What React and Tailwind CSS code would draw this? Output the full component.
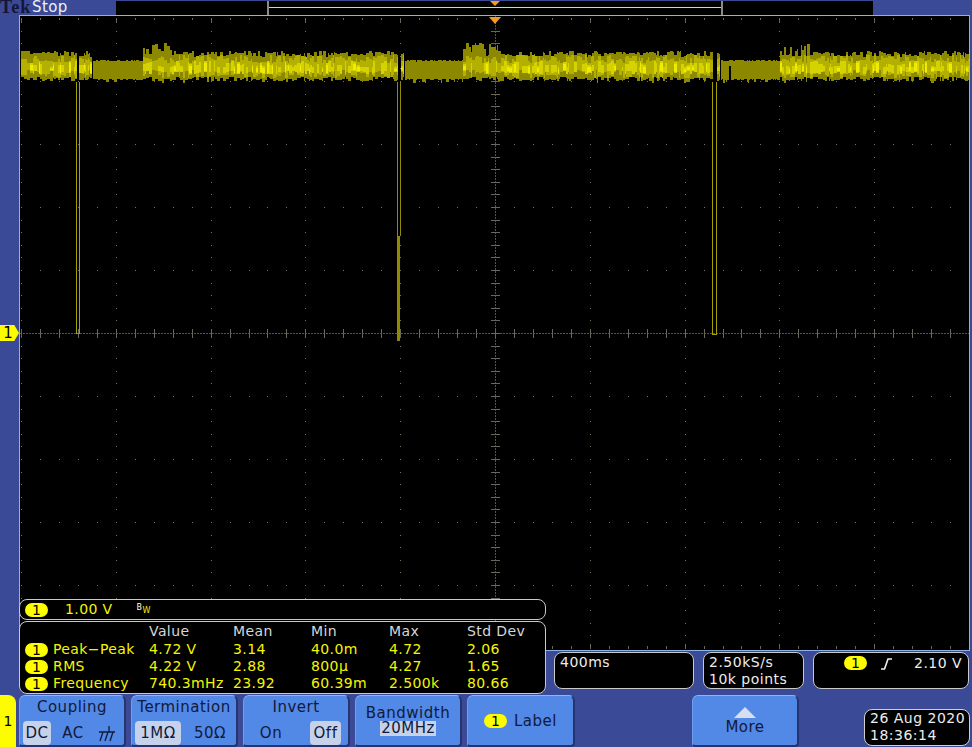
import React from 'react';

const FONT = { fontFamily: '"DejaVu Sans", sans-serif' };

// graticule origin sits at page (20,16), all wave numbers below are page coords
const OX = 20;
const OY = 16;
const CX = 495;
const CY = 333;
const DIV_X = 94.8;
const DIV_Y = 63;

const rng = (() => {
  let s = 12345;
  return () => {
    s = (s * 1664525 + 1013904223) % 4294967296;
    return s / 4294967296;
  };
})();

const segments = [
  [21, 92, 'noisy'],
  [93, 143, 'quiet'],
  [143, 176, 'tall'],
  [176, 404, 'noisy'],
  [405, 463, 'quiet'],
  [463, 498, 'tall'],
  [498, 720, 'noisy'],
  [721, 780, 'quiet'],
  [780, 818, 'tall'],
  [818, 969, 'noisy'],
];
const gaps = [77, 78, 398, 399, 400, 713, 714, 715, 716];

function buildWave() {
  let olive = '';
  let mid = '';
  let bright = '';
  let peak = '';
  segments.forEach(([a, b, kind]) => {
    let x = a;
    while (x < b) {
      const r1 = rng();
      const r2 = rng();
      const r3 = rng();
      const r4 = rng();
      // noise comes in little blocks 1-3px wide, not single pixel columns
      const w = 1 + Math.floor(rng() * 3);
      for (let i = 0; i < w && x < b; i++, x++) {
        if (gaps.includes(x)) continue;
        const px = x - OX + 0.5;
        if (kind === 'quiet') {
          const top = 60 + Math.floor(r1 * 2) + (r3 > 0.9 ? 1 : 0);
          const bot = 79 + Math.floor(r2 * 2) + (r4 > 0.8 ? 3 : 0);
          olive += `M${px} ${top - OY}V${bot - OY}`;
          continue;
        }
        const spike = kind === 'tall' ? 43 + r1 * 14 : (r1 > 0.9 ? 47 : 51) + r1 * 7;
        const top = Math.floor(spike);
        const bot = Math.floor(77 + r2 * 5 + (r4 > 0.9 ? 2 : 0));
        olive += `M${px} ${top - OY}V${bot - OY}`;
        const mt = Math.floor(55 + r3 * 9);
        const mb = Math.floor(70 + r4 * 9);
        mid += `M${px} ${mt - OY}V${mb - OY}`;
        if (r1 > 0.35) {
          const bt = Math.floor(61 + r2 * 7);
          const bb = Math.floor(69 + r1 * 6);
          bright += `M${px} ${bt - OY}V${bb - OY}`;
          if (r3 > 0.72) peak += `M${px} ${bt + 2 - OY}V${bb - 1 - OY}`;
        }
      }
    }
  });
  return { olive, mid, bright, peak };
}

function buildGrid() {
  let dots = '';
  let ticks = '';
  // top and bottom edge ticks, plus the dotted rows
  for (let i = 0; i <= 50; i++) {
    const x = Math.round(CX + (i - 25) * (DIV_X / 5)) - OX + 0.5;
    const major = i % 5 === 0;
    ticks += `M${x} ${18 - OY}V${(major ? 23 : 20) - OY}`;
    ticks += `M${x} ${(major ? 644 : 646) - OY}V${649 - OY}`;
    for (let r = 1; r < 10; r++) {
      if (r === 5) continue;
      const y = CY + (r - 5) * DIV_Y - OY;
      dots += `M${x} ${y}v1`;
    }
    ticks += `M${x} ${CY - 4 - OY}V${CY + 5 - OY}`;
  }
  // dotted columns
  for (let c = 0; c <= 10; c++) {
    if (c === 5) continue;
    const x = Math.round(CX + (c - 5) * DIV_X) - OX + 0.5;
    for (let i = 1; i < 50; i++) {
      const y = Math.round(18 + i * (DIV_Y / 5)) - OY;
      dots += `M${x} ${y}v1`;
    }
  }
  // center cross, short bars on the vertical
  for (let i = 0; i <= 50; i++) {
    const y = Math.round(18 + i * (DIV_Y / 5)) - OY + 0.5;
    ticks += `M${CX - 4 - OX} ${y}H${CX + 5 - OX}`;
  }
  return { dots, ticks };
}

const wave = buildWave();
const grid = buildGrid();

const Graticule = () => (
  <div className="ml-[19px] h-[636px] w-[951px] border border-[#8fb1ea] bg-black">
    <svg width="949" height="634" className="block" shapeRendering="crispEdges">
      <path d={grid.dots} stroke="#77745f" strokeWidth="1" fill="none" />
      <path d={`M0 ${CY - OY + 0.5}H949`} stroke="#56534a" strokeDasharray="2 1" fill="none" />
      <path d={`M${CX - OX + 0.5} 0V634`} stroke="#56534a" strokeDasharray="2 1" fill="none" />
      <path d={grid.ticks} stroke="#69665a" strokeWidth="1" fill="none" />

      <g className="[filter:blur(0.45px)]">
        <path d={wave.olive} stroke="#8c8800" fill="none" />
        <path d={wave.mid} stroke="#b4b000" fill="none" />
        <path d={wave.bright} stroke="#d6d200" fill="none" />
        <path d={wave.peak} stroke="#f0ec00" fill="none" />
        <path d="M709 50h2v16h-2z" fill="#000" />
      </g>

      {/* the three dropouts */}
      <path d="M56.5 66V317H59.5V66" stroke="#a3a000" fill="none" />
      <path d="M377.5 66V220M380.5 66V220" stroke="#8f8b00" fill="none" />
      <path d="M377 220h3v105h-3z" fill="#8f8b00" />
      <path d="M692.5 66V318H696.5V66" stroke="#a3a000" fill="none" />

      <polygon points="469,1 481,1 475,8" fill="#f59a23" shapeRendering="auto" />
    </svg>
  </div>
);

const Pill = ({ className = '' }) => (
  <span className={`inline-flex h-[14px] w-[23px] shrink-0 items-center justify-center rounded-full bg-[#fdfd00] text-[14px] leading-none tracking-normal text-black ${className}`}>
    1
  </span>
);

const measurements = [
  { name: 'Peak−Peak', value: '4.72 V', mean: '3.14', min: '40.0m', max: '4.72', dev: '2.06' },
  { name: 'RMS', value: '4.22 V', mean: '2.88', min: '800µ', max: '4.27', dev: '1.65' },
  { name: 'Frequency', value: '740.3mHz', mean: '23.92', min: '60.39m', max: '2.500k', dev: '80.66' },
];

const COLS = 'grid grid-cols-[28px_96px_84px_78px_78px_78px_1fr]';

const Readouts = () => (
  <div className="z-10 -mt-[52px] ml-[19px] flex h-[95px] w-[527px] flex-col gap-px">
    <div className="flex h-[21px] items-center rounded-lg border border-[#c9c9c9] bg-black pl-[5px] text-[14px] tracking-[0.4px] text-[#f5f500]">
      <Pill />
      <span className="ml-[17px]">1.00 V</span>
      <span className="ml-[24px] flex items-start text-[8px] leading-none text-white">
        B<span className="mt-[3px] text-[#f5f500]">W</span>
      </span>
    </div>
    <div className="flex h-[73px] flex-col rounded-lg border border-[#c9c9c9] bg-black pl-[5px] pt-px text-[14px] leading-[17px] tracking-[0.4px] text-[#f5f500]">
      <div className={`${COLS} mb-px text-[#d6d6d6]`}>
        <span />
        <span />
        <span>Value</span>
        <span>Mean</span>
        <span>Min</span>
        <span>Max</span>
        <span>Std Dev</span>
      </div>
      {measurements.map((m) => (
        <div key={m.name} className={`${COLS} items-center`}>
          <Pill />
          <span>{m.name}</span>
          <span>{m.value}</span>
          <span>{m.mean}</span>
          <span>{m.min}</span>
          <span>{m.max}</span>
          <span>{m.dev}</span>
        </div>
      ))}
    </div>
  </div>
);

const SideBox = ({ className = '', children }) => (
  <div className={`h-[37px] rounded-lg border border-[#c9c9c9] bg-black text-[14px] leading-[17px] tracking-[0.5px] text-[#ededed] ${className}`}>
    {children}
  </div>
);

const MenuButton = ({ className = 'w-[107px]', children }) => (
  <div className={`flex h-[52px] flex-col items-center rounded-t-md rounded-b-sm border-t border-l border-t-[#8db4f4] border-l-[#6f9ef0] border-r-2 border-b-2 border-r-[#27336e] border-b-[#27336e] bg-[#5288e6] text-[15px] tracking-[0.5px] text-[#101a3a] ${className}`}>
    {children}
  </div>
);

const Choice = ({ active, children, className = '' }) => (
  <span className={`flex h-[24px] items-center justify-center rounded ${active ? 'bg-[#c6d2ea]' : ''} ${className}`}>
    {children}
  </span>
);

const GroundIcon = () => (
  <svg width="18" height="17" viewBox="0 0 18 17" fill="none" stroke="#101a3a" strokeWidth="1.3">
    <path d="M11 1v6M1 7h16M5 7L2 16M10 7L7 16M15 7L12 16" />
  </svg>
);

const App = () => (
  <div className="relative h-[747px] w-[972px] overflow-hidden bg-[#3b4a96]" style={FONT}>
    {/* status line and record view */}
    <div className="flex h-[15px]">
      <div className="flex h-[15px] w-[116px] items-end">
        <span className="w-[32px] text-[18px] font-bold leading-[15px] tracking-[1px] text-[#14163a] [font-family:'Liberation_Serif',serif]">
          Tek
        </span>
        <span className="text-[15px] leading-[15px] tracking-[0.4px] text-[#eef0fa]">
          Stop
        </span>
      </div>
      <div className="relative mt-px flex h-[14px] w-[757px] bg-[#000200]">
        <div className="ml-[151px] flex h-[14px] w-[456px] items-center border-x-2 border-[#8a8a8a] pb-[1px]">
          <div className="h-px w-full bg-[#f0ec00]" />
        </div>
        <div className="absolute left-[374px] top-0 h-0 w-0 border-x-[5px] border-t-[5px] border-x-transparent border-t-[#f59a23]" />
      </div>
    </div>

    <Graticule />

    {/* lower readouts */}
    <div className="flex h-[44px]">
      <Readouts />
      <div className="ml-[8px] flex gap-[9px] pt-px">
        <SideBox className="w-[140px] pl-[5px] pt-[1px]">400ms</SideBox>
        <SideBox className="w-[101px] pl-[5px] pt-[1px]">
          <div>2.50kS/s</div>
          <div>10k points</div>
        </SideBox>
        <SideBox className="flex w-[156px] items-start pl-[30px] pt-[2px]">
          <Pill className="mt-px" />
          <svg width="14" height="14" viewBox="0 0 14 14" fill="none" stroke="#f0f0f0" strokeWidth="1.6" className="ml-[13px] mt-[2px]">
            <path d="M1 12h3.5L8 2h4" />
          </svg>
          <span className="ml-[20px]">2.10 V</span>
        </SideBox>
      </div>
    </div>

    {/* bottom menu */}
    <div className="flex h-[52px] items-start">
      <div className="flex h-[52px] w-[16px] items-center justify-center rounded-tr-lg bg-[#fdfd00] text-[14px] text-black">1</div>
      <div className="ml-[3px] flex gap-[5px]">
        <MenuButton>
          <span className="mt-px leading-[20px]">Coupling</span>
          <div className="mt-[4px] flex w-full items-center px-[3px]">
            <Choice active className="w-[28px]">DC</Choice>
            <Choice className="ml-[8px] w-[28px]">AC</Choice>
            <Choice className="ml-[7px] w-[26px]"><GroundIcon /></Choice>
          </div>
        </MenuButton>
        <MenuButton>
          <span className="mt-px leading-[20px]">Termination</span>
          <div className="mt-[4px] flex w-full items-center justify-between pl-[3px] pr-[9px]">
            <Choice active className="w-[46px]">1MΩ</Choice>
            <Choice className="w-[34px]">50Ω</Choice>
          </div>
        </MenuButton>
        <MenuButton>
          <span className="mt-px leading-[20px]">Invert</span>
          <div className="mt-[4px] flex w-full items-center justify-between pl-[12px] pr-[7px]">
            <Choice className="w-[30px]">On</Choice>
            <Choice active className="w-[31px]">Off</Choice>
          </div>
        </MenuButton>
        <MenuButton>
          <span className="mt-[9px] leading-[16px]">Bandwidth</span>
          <span className="bg-[#c6d2ea] px-px leading-[15px]">20MHz</span>
        </MenuButton>
        <MenuButton className="w-[108px] !flex-row justify-center">
          <Pill />
          <span className="ml-[7px] leading-[18px]">Label</span>
        </MenuButton>
      </div>
      <MenuButton className="ml-[117px] w-[107px]">
        <div className="mt-[11px] h-0 w-0 border-x-[11px] border-b-[11px] border-x-transparent border-b-[#d6def0]" />
        <span className="leading-[18px]">More</span>
      </MenuButton>
      <div className="ml-[65px] mt-[14px] h-[37px] w-[106px] rounded-lg border border-[#d0d0d0] bg-black pl-[5px] text-[14px] leading-[17px] tracking-[0.5px] text-[#ededed]">
        <div>26 Aug 2020</div>
        <div>18:36:14</div>
      </div>
    </div>

    {/* channel 1 ground marker */}
    <div className="absolute left-0 top-[325px] flex h-[16px] w-[19px] items-center justify-center bg-[#fdfd00] pr-[3px] text-[15px] text-black [clip-path:polygon(0_0,75%_0,100%_50%,75%_100%,0_100%)]">
      1
    </div>
  </div>
);

export default App;
